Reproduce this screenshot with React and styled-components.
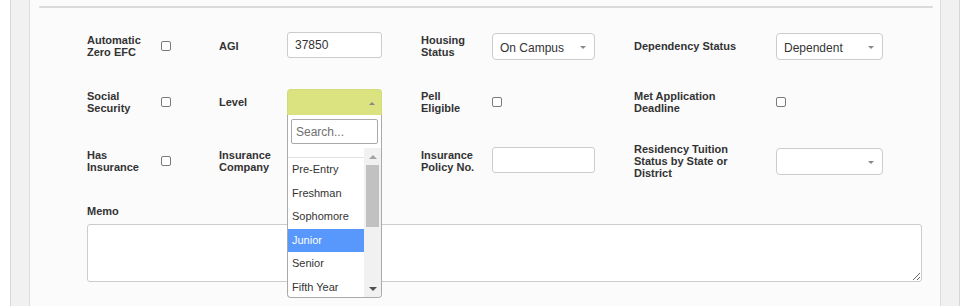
import React from 'react';
import styled, { createGlobalStyle } from 'styled-components';

const levels = ['Pre-Entry', 'Freshman', 'Sophomore', 'Junior', 'Senior', 'Fifth Year'];

function Check() {
  return <Box type="checkbox" />;
}

function Select({ value, w }) {
  return (
    <SelectBox w={w}>
      <span>{value}</span>
      <Arrow />
    </SelectBox>
  );
}

function LevelDropdown() {
  return (
    <LevelWrap>
      <LevelBox>
        <Arrow up />
      </LevelBox>
      <Drop>
        <Search placeholder="Search..." readOnly />
        <Results>
          <Items>
            <Spacer />
            {levels.map((l) => (
              <Item key={l} active={l === 'Junior'}>{l}</Item>
            ))}
          </Items>
          <Track>
            <TrackArrow up />
            <Thumb />
            <TrackFill />
            <TrackArrow />
          </Track>
        </Results>
      </Drop>
    </LevelWrap>
  );
}

export default function App() {
  return (
    <>
      <Global />
      <Outer>
        <Strip>
          <Panel>
            <Rule />
            <Grid>
              <Label>Automatic<br />Zero EFC</Label>
              <Cell><Check /></Cell>
              <Label>AGI</Label>
              <Cell><Input defaultValue="37850" /></Cell>
              <Label>Housing<br />Status</Label>
              <Cell><Select value="On Campus" w={103} /></Cell>
              <Label>Dependency Status</Label>
              <Cell><Select value="Dependent" /></Cell>

              <Label>Social<br />Security</Label>
              <Cell><Check /></Cell>
              <Label>Level</Label>
              <Cell><LevelDropdown /></Cell>
              <Label>Pell<br />Eligible</Label>
              <Cell><Check /></Cell>
              <Label>Met Application<br />Deadline</Label>
              <Cell><Check /></Cell>

              <Label>Has<br />Insurance</Label>
              <Cell><Check /></Cell>
              <Label>Insurance<br />Company</Label>
              <Cell><Select value="" w={95} /></Cell>
              <Label>Insurance<br />Policy No.</Label>
              <Cell><Input wide /></Cell>
              <Label>Residency Tuition<br />Status by State or<br />District</Label>
              <Cell><Select value="" /></Cell>
            </Grid>
            <Memo>
              <Label>Memo</Label>
              <Area />
            </Memo>
          </Panel>
        </Strip>
      </Outer>
    </>
  );
}

const Global = createGlobalStyle`
  html, body { margin: 0; padding: 0; background: #fff; }
  body { font-family: "Liberation Sans", Arial, sans-serif; color: #333; }
`;

const Outer = styled.div`
  height: 306px;
  padding: 0 8px 0 10px;
  overflow: hidden;
`;

const Strip = styled.div`
  height: 100%;
  background: #f1f1f1;
  border-left: 1px solid #d6d6d6;
  border-right: 1px solid #d6d6d6;
  padding: 0 18px;
`;

const Panel = styled.div`
  height: 100%;
  background: #fbfbfb;
  border-left: 1px solid #dcdcdc;
  border-right: 1px solid #dcdcdc;
`;

const Rule = styled.div`
  height: 2px;
  margin: 0 7px 0 9px;
  position: relative;
  top: 6px;
  background: #dadada;
  border-radius: 1px;
`;

const Grid = styled.div`
  display: grid;
  grid-template-columns: 74px 58px 68px 134px 71px 142px 142px 1fr;
  grid-template-rows: 30px 30px 36px;
  row-gap: 26px;
  align-items: center;
  padding: 29px 0 0 57px;
`;

const Label = styled.div`
  font-size: 11px;
  font-weight: bold;
  line-height: 12px;
  color: #333;
`;

const Cell = styled.div`
  display: flex;
  align-items: center;
`;

const Box = styled.input`
  appearance: none;
  margin: 0;
  width: 10px;
  height: 10px;
  border: 1px solid #7a7a7a;
  border-radius: 2px;
  background: #fff;
`;

const Input = styled.input`
  box-sizing: border-box;
  width: ${(p) => (p.wide ? '103px' : '95px')};
  height: 26px;
  margin-top: -3px;
  border: 1px solid #ccc;
  border-radius: 3px;
  background: #fff;
  padding: 0 7px;
  font: 12px "Liberation Sans", Arial, sans-serif;
  color: #333;
  outline: none;
`;

const SelectBox = styled.div`
  box-sizing: border-box;
  width: ${(p) => p.w || 107}px;
  height: 27px;
  display: flex;
  align-items: center;
  justify-content: space-between;
  border: 1px solid #ccc;
  border-radius: 4px;
  background: #fff;
  padding: 3px 8px 0 7px;
  font-size: 12px;
  color: #333;
`;

const Arrow = styled.i`
  width: 0;
  height: 0;
  border-left: 3px solid transparent;
  border-right: 3px solid transparent;
  ${(p) => (p.up ? 'border-bottom: 3px solid #888;' : 'border-top: 3px solid #888;')}
`;

const LevelWrap = styled.div`
  position: relative;
  width: 95px;
`;

const LevelBox = styled.div`
  box-sizing: border-box;
  height: 26px;
  display: flex;
  align-items: center;
  justify-content: flex-end;
  padding: 1px 6px 0 0;
  background: #dbe380;
  border: 1px solid #d4dc7a;
  border-bottom: none;
  border-radius: 4px 4px 0 0;
`;

const Drop = styled.div`
  position: absolute;
  top: 26px;
  left: 0;
  z-index: 5;
  box-sizing: border-box;
  width: 95px;
  height: 183px;
  background: #fff;
  border: 1px solid #aaa;
  border-top: none;
  border-radius: 0 0 4px 4px;
  display: flex;
  flex-direction: column;
  overflow: hidden;
`;

const Search = styled.input`
  box-sizing: border-box;
  margin: 4px 3px 4px 3px;
  height: 25px;
  width: 87px;
  border: 1px solid #aaa;
  border-radius: 2px;
  padding: 0 4px;
  font: 12px "Liberation Sans", Arial, sans-serif;
  outline: none;
  &::placeholder { color: #6f6f6f; }
`;

const Results = styled.div`
  flex: 1;
  display: flex;
  overflow: hidden;
`;

const Items = styled.div`
  flex: 1;
  overflow: hidden;
`;

const Spacer = styled.div`
  height: 9px;
  border-bottom: 1px solid #e2e2e2;
`;

const Item = styled.div`
  height: 23.5px;
  line-height: 23.5px;
  padding-left: 4px;
  font-size: 11px;
  white-space: nowrap;
  color: ${(p) => (p.active ? '#fff' : '#333')};
  background: ${(p) => (p.active ? '#5897fb' : 'transparent')};
`;

const Track = styled.div`
  width: 17px;
  background: #f1f1f1;
  display: flex;
  flex-direction: column;
  align-items: center;
`;

const TrackArrow = styled.div`
  height: 17px;
  width: 17px;
  display: flex;
  align-items: center;
  justify-content: center;
  &::after {
    content: '';
    border-left: 4px solid transparent;
    border-right: 4px solid transparent;
    ${(p) => (p.up ? 'border-bottom: 4px solid #a3a3a3;' : 'border-top: 4px solid #505050;')}
  }
`;

const Thumb = styled.div`
  width: 13px;
  height: 62px;
  background: #c1c1c1;
`;

const TrackFill = styled.div`
  flex: 1;
`;

const Memo = styled.div`
  padding: 26px 18px 0 57px;
  display: flex;
  flex-direction: column;
  gap: 7px;
`;

const Area = styled.textarea`
  box-sizing: border-box;
  width: 835px;
  height: 58px;
  border: 1px solid #ccc;
  border-radius: 3px;
  background: #fff;
  outline: none;
`;
